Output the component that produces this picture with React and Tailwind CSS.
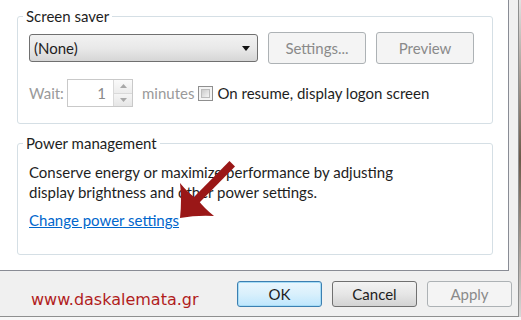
import React from 'react';

const ui = { fontFamily: 'Lato, "Noto Sans", sans-serif' };

function GroupBox({ title, className, children }) {
  return (
    <fieldset className={`w-[476px] border border-[#d5dfe5] rounded-[3px] ${className}`}>
      <legend className="-ml-[6px] px-[3px] leading-[20px] text-[15px] text-[#1e1e1e]">{title}</legend>
      {children}
    </fieldset>
  );
}

function WinButton({ children, width = 'w-[98px]', height = 'h-[32px]', variant = 'disabled' }) {
  const styles = {
    disabled: 'border-[#adb2b5] bg-[#f4f4f4] text-[#8a8a8a]',
    normal: 'border-[#707070] bg-gradient-to-b from-[#f3f3f3] via-[#e6e6e6] to-[#d3d3d3] text-[#1e1e1e]',
    default: 'border-[#3c7fb1] bg-gradient-to-b from-[#eaf6fd] via-[#d9f0fc] to-[#bee6fd] text-[#1e1e1e] shadow-[inset_0_0_0_1px_#a6dcf6]',
  };
  return (
    <button className={`${width} ${height} border rounded-[3px] text-[15px] leading-none flex items-center justify-center ${styles[variant]}`}>
      {children}
    </button>
  );
}

function Arrow() {
  return (
    <svg className="absolute left-0 top-0 pointer-events-none" width="521" height="320">
      <polygon points="229.5,161 235,166.5 199,203 193.5,197.5" fill="#9a1717" />
      <path d="M180,183 Q182,200 180,218 Q197,215 214,216 Q204,208 198,200 Q188,193 180,183 Z" fill="#9a1717" />
    </svg>
  );
}

export default function App() {
  return (
    <div className="relative w-[521px] h-[320px] flex bg-gradient-to-b from-[#e9e9e9] to-[#f7f7f7] overflow-hidden" style={ui}>
      <div className="w-[519px] h-[317px] shrink-0 flex flex-col bg-[#f0f0f0] border-r border-b border-[#8e8f8f]">
        <div className="w-[509px] h-[271px] shrink-0 bg-white border-r border-b border-[#898c95] pl-[17px] pt-[6px]">
          <GroupBox title="Screen saver" className="pl-[11px] pt-[6px] pb-[16px]">
            <div className="flex items-center">
              <div className="w-[229px] h-[28px] border border-[#707070] rounded-[3px] bg-gradient-to-b from-[#f2f2f2] via-[#e9e9e9] to-[#d6d6d6] flex items-center pl-[4px] pr-[7px] text-[15px] text-[#1e1e1e]">
                <span className="flex-1">(None)</span>
                <svg width="8" height="5" viewBox="0 0 8 5"><polygon points="0,0 8,0 4,5" fill="#111" /></svg>
              </div>
              <div className="ml-[10px] flex gap-[10px]">
                <WinButton>Settings...</WinButton>
                <WinButton>Preview</WinButton>
              </div>
            </div>
            <div className="mt-[15px] flex items-center text-[15px]">
              <span className="w-[38px] text-[#9a9a9a]">Wait:</span>
              <div className="flex h-[28px] border border-[#c9c9c9]">
                <div className="w-[45px] flex items-center justify-end pr-[7px] text-[#8a8a8a]">1</div>
                <div className="w-[19px] flex flex-col border-l border-[#d9d9d9]">
                  <div className="flex-1 flex items-center justify-center bg-gradient-to-b from-[#fafafa] to-[#ececec] border-b border-[#d9d9d9]">
                    <svg width="7" height="4"><polygon points="0,4 7,4 3.5,0" fill="#a8a8a8" /></svg>
                  </div>
                  <div className="flex-1 flex items-center justify-center bg-gradient-to-b from-[#f5f5f5] to-[#e6e6e6]">
                    <svg width="7" height="4"><polygon points="0,0 7,0 3.5,4" fill="#a8a8a8" /></svg>
                  </div>
                </div>
              </div>
              <span className="ml-[9px] text-[#9a9a9a]">minutes</span>
              <div className="ml-[4px] w-[15px] h-[15px] border border-[#8f8f8f] bg-[#f4f4f4] p-[2px]">
                <div className="w-full h-full border border-[#bcbcbc] bg-gradient-to-br from-[#cbcbcb] to-[#f5f5f5]" />
              </div>
              <span className="ml-[4px] text-[#1e1e1e]">On resume, display logon screen</span>
            </div>
          </GroupBox>
          <GroupBox title="Power management" className="mt-[9px] pl-[11px] pt-[9px] pb-[22px]">
            <p className="text-[15px] leading-[20px] text-[#1e1e1e]">
              Conserve energy or maximize performance by adjusting<br />
              display brightness and other power settings.
            </p>
            <a href="#" className="mt-[8px] inline-block text-[15px] leading-[20px] text-[#0066cc] underline">
              Change power settings
            </a>
          </GroupBox>
        </div>
        <div className="flex-1 flex">
          <div className="w-[237px] shrink-0 pl-[31px] pt-[19px] text-[16px] leading-[20px] text-[#b11d1d]" style={{ fontFamily: '"DejaVu Sans", Verdana, sans-serif' }}>
            www.daskalemata.gr
          </div>
          <div className="pt-[10px] flex gap-[10px]">
            <WinButton width="w-[85px]" height="h-[26px]" variant="default">OK</WinButton>
            <WinButton width="w-[85px]" height="h-[26px]" variant="normal">Cancel</WinButton>
            <WinButton width="w-[85px]" height="h-[26px]">Apply</WinButton>
          </div>
        </div>
      </div>
      <div className="w-[2px] h-[317px] bg-gradient-to-b from-[#e2e2e2] via-[#6b5a4a] to-[#d8d8d8]" />
      <Arrow />
    </div>
  );
}
